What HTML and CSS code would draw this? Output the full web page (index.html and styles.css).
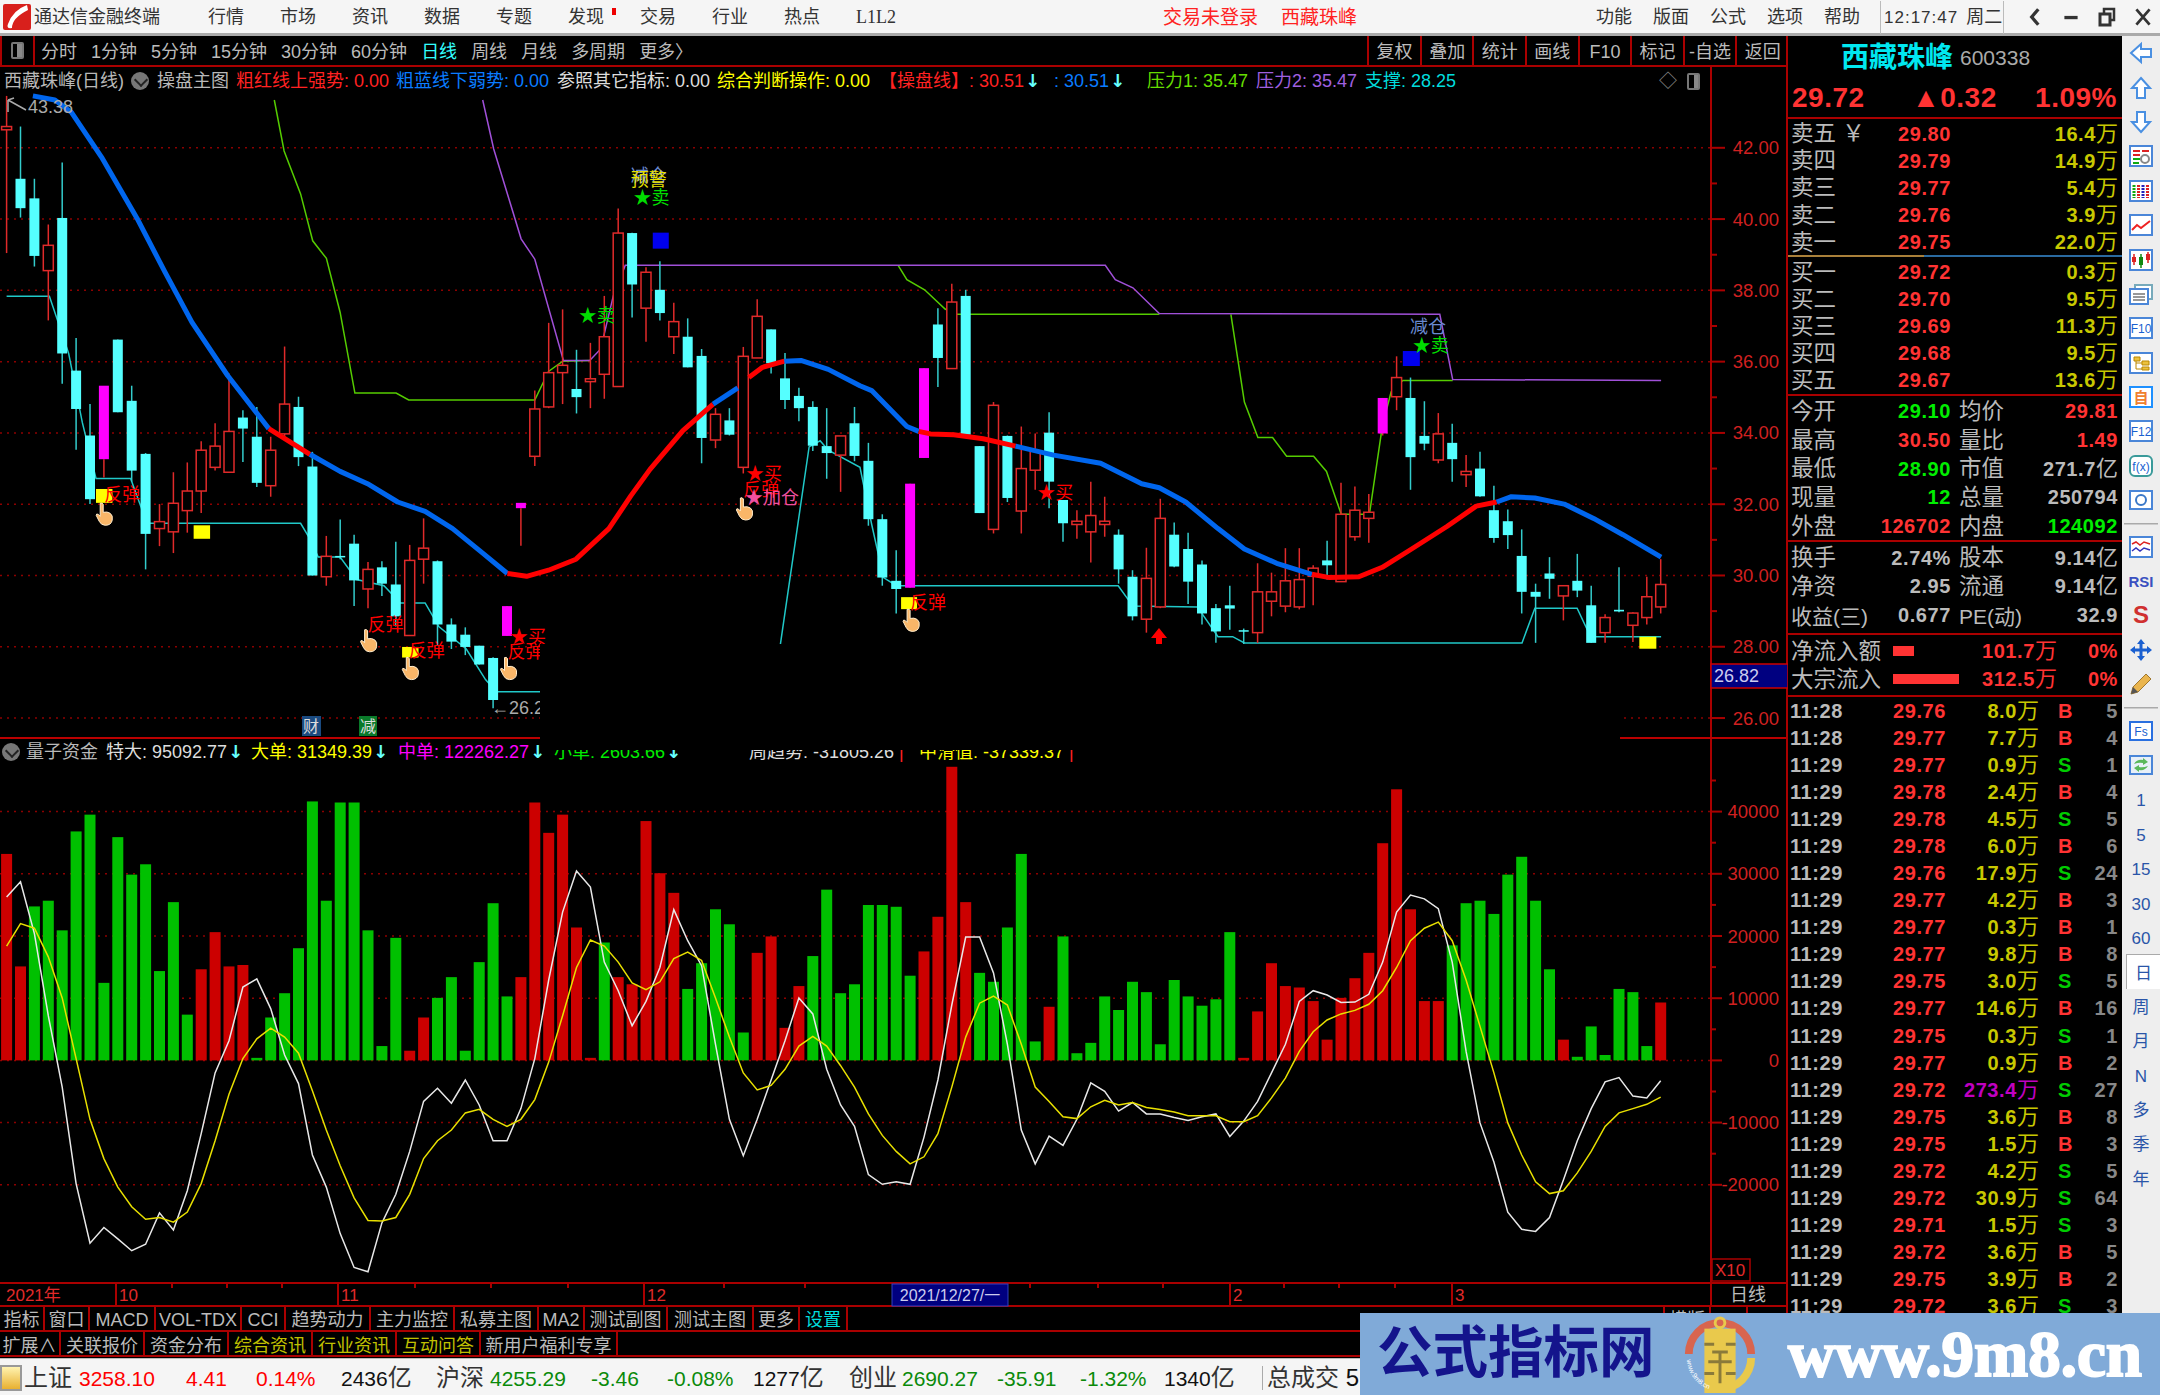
FILE: index.html
```html
<!DOCTYPE html>
<html lang="zh-CN">
<head>
    <meta charset="UTF-8">
    <title>通达信金融终端</title>
    <link rel="stylesheet" href="styles.css">
</head>
<body>

<header class="titlebar">
    <svg class="logo" viewBox="0 0 28 26"><rect width="28" height="26" rx="2" fill="#d8201c"/><path d="M24 1 Q10 6 5 20 Q3 25 9 24 Q9 14 25 6 Z" fill="#fff"/></svg>
    <span class="app-name">通达信金融终端</span>
    <nav class="menu">
        <span>行情</span><span>市场</span><span>资讯</span><span>数据</span><span>专题</span>
        <span class="has-dot">发现<i class="dot"></i></span>
        <span>交易</span><span>行业</span><span>热点</span><span class="serif">L1L2</span>
    </nav>
    <span class="notice login">交易未登录</span>
    <span class="notice stock">西藏珠峰</span>
    <nav class="menu menu-right">
        <span>功能</span><span>版面</span><span>公式</span><span>选项</span><span>帮助</span>
    </nav>
    <div class="clock">12:17:47<span class="week">周二</span></div>
    <div class="winbtns">
        <svg viewBox="0 0 14 20"><path d="M10 3 L4 10 L10 17" fill="none" stroke="#333" stroke-width="3"/></svg>
        <svg viewBox="0 0 14 20"><rect x="1" y="9" width="12" height="3" fill="#333"/></svg>
        <svg viewBox="0 0 18 20"><rect x="6" y="2" width="10" height="11" fill="none" stroke="#333" stroke-width="2.5"/><rect x="2" y="7" width="10" height="11" fill="#f4f4f4" stroke="#333" stroke-width="3"/></svg>
        <svg viewBox="0 0 16 20"><path d="M2 3 L14 17 M14 3 L2 17" stroke="#333" stroke-width="2.5"/></svg>
    </div>
</header>

<div class="workspace">
    <div class="center">
        <div class="periodbar">
            <div class="panel-toggle"><i></i></div>
            <div class="periods">
                <span>分时</span><span>1分钟</span><span>5分钟</span><span>15分钟</span><span>30分钟</span><span>60分钟</span>
                <span class="on">日线</span><span>周线</span><span>月线</span><span>多周期</span><span>更多〉</span>
            </div>
            <div class="actions">
                <span>复权</span><span>叠加</span><span>统计</span><span>画线</span><span>F10</span><span>标记</span><span>-自选</span><span>返回</span>
            </div>
        </div>

        <div class="charts">
            <section class="pane pane-main">
                <div class="pane-head head-main">
                    <span class="c-gray">西藏珠峰(日线)</span>
                    <i class="fold"></i>
                    <span class="c-gray">操盘主图</span>
                    <span class="c-red">粗红线上强势: 0.00</span>
                    <span class="c-blue">粗蓝线下弱势: 0.00</span>
                    <span class="c-white">参照其它指标: 0.00</span>
                    <span class="c-yellow">综合判断操作: 0.00</span>
                    <span class="c-red">【操盘线】: 30.51<b class="arrow">↓</b></span>
                    <span class="c-blue">: 30.51<b class="arrow">↓</b></span>
                    <span class="c-green">压力1: 35.47</span>
                    <span class="c-purple">压力2: 35.47</span>
                    <span class="c-cyan">支撑: 28.25</span>
                    <span class="c-dim">◇</span>
                    <i class="mini-box"></i>
                </div>
                <svg id="mainChart" class="plot" viewBox="0 92 1788 645"></svg>
            </section>
            <section class="pane pane-ind">
                <div class="pane-head head-ind">
                    <i class="fold"></i>
                    <span class="c-gray">量子资金</span>
                    <span class="c-white">特大: 95092.77<b class="arrow">↓</b></span>
                    <span class="c-yellow">大单: 31349.39<b class="arrow">↓</b></span>
                    <span class="c-magenta">中单: 122262.27<b class="arrow">↓</b></span>
                    <span class="c-lime">小单: 2603.66<b class="arrow">↓</b></span>
                    <span class="c-white">周趋势: -31805.26<b class="c-red"> |</b></span>
                    <span class="c-yellow">中滑值: -37339.37<b class="c-red"> |</b></span>
                </div>
                <svg id="indChart" class="plot plot-ind" viewBox="0 764 1788 518"></svg>
            </section>
            <div class="mask"></div>
        </div>

        <svg id="timeAxis" class="timeaxis" viewBox="0 1282 1788 25"></svg>

        <div class="tabs tabs-top">
            <span>指标</span><span>窗口</span><span>MACD</span><span>VOL-TDX</span><span>CCI</span><span>趋势动力</span><span>主力监控</span><span>私募主图</span><span>MA2</span><span>测试副图</span><span>测试主图</span><span>更多</span><span class="c-cyan">设置</span><span></span><span>横版</span><span></span>
        </div>
        <div class="tabs tabs-ext">
            <span>扩展∧</span><span>关联报价</span><span>资金分布</span><span class="c-olive">综合资讯</span><span class="c-olive">行业资讯</span><span class="c-olive">互动问答</span><span>新用户福利专享</span>
        </div>
    </div>

    <aside class="quote">
        <div class="q-name"><span class="q-title">西藏珠峰</span><span class="q-code">600338</span></div>
        <div class="q-price"><span>29.72</span><span>▲0.32</span><span>1.09%</span></div>

        <div class="q-block q-levels">
            <div class="lvl"><span class="lb">卖五 ￥</span><span class="n up">29.80</span><span class="n vol">16.4<i>万</i></span></div>
            <div class="lvl"><span class="lb">卖四</span><span class="n up">29.79</span><span class="n vol">14.9<i>万</i></span></div>
            <div class="lvl"><span class="lb">卖三</span><span class="n up">29.77</span><span class="n vol">5.4<i>万</i></span></div>
            <div class="lvl"><span class="lb">卖二</span><span class="n up">29.76</span><span class="n vol">3.9<i>万</i></span></div>
            <div class="lvl"><span class="lb">卖一</span><span class="n up">29.75</span><span class="n vol">22.0<i>万</i></span></div>
        </div>
        <div class="q-split"></div>
        <div class="q-block q-levels q-lined">
            <div class="lvl"><span class="lb">买一</span><span class="n up">29.72</span><span class="n vol">0.3<i>万</i></span></div>
            <div class="lvl"><span class="lb">买二</span><span class="n up">29.70</span><span class="n vol">9.5<i>万</i></span></div>
            <div class="lvl"><span class="lb">买三</span><span class="n up">29.69</span><span class="n vol">11.3<i>万</i></span></div>
            <div class="lvl"><span class="lb">买四</span><span class="n up">29.68</span><span class="n vol">9.5<i>万</i></span></div>
            <div class="lvl"><span class="lb">买五</span><span class="n up">29.67</span><span class="n vol">13.6<i>万</i></span></div>
        </div>

        <div class="q-block q-stats q-lined">
            <div class="st"><span class="lb">今开</span><span class="n down">29.10</span><span class="lb">均价</span><span class="n up">29.81</span></div>
            <div class="st"><span class="lb">最高</span><span class="n up">30.50</span><span class="lb">量比</span><span class="n up">1.49</span></div>
            <div class="st"><span class="lb">最低</span><span class="n down">28.90</span><span class="lb">市值</span><span class="n flat">271.7<i>亿</i></span></div>
            <div class="st"><span class="lb">现量</span><span class="n down">12</span><span class="lb">总量</span><span class="n flat">250794</span></div>
            <div class="st"><span class="lb">外盘</span><span class="n up">126702</span><span class="lb">内盘</span><span class="n down">124092</span></div>
        </div>
        <div class="q-block q-stats q-fund q-lined">
            <div class="st"><span class="lb">换手</span><span class="n flat">2.74%</span><span class="lb">股本</span><span class="n flat">9.14<i>亿</i></span></div>
            <div class="st"><span class="lb">净资</span><span class="n flat">2.95</span><span class="lb">流通</span><span class="n flat">9.14<i>亿</i></span></div>
            <div class="st"><span class="lb lb-tight">收益(三)</span><span class="n flat">0.677</span><span class="lb lb-tight">PE(动)</span><span class="n flat">32.9</span></div>
        </div>
        <div class="q-block q-flow q-lined">
            <div class="fl"><span class="lb">净流入额</span><span class="bar-cell"><i class="flow-bar" style="width:21px"></i></span><span class="n up">101.7<i>万</i></span><span class="n up">0%</span></div>
            <div class="fl"><span class="lb">大宗流入</span><span class="bar-cell"><i class="flow-bar" style="width:66px"></i></span><span class="n up">312.5<i>万</i></span><span class="n up">0%</span></div>
        </div>
        <div id="ticks" class="q-ticks"></div>
    </aside>

    <aside class="strip">
        <div class="tool"><svg viewBox="0 0 24 24"><path d="M2 12 L12 3 V8 H22 V16 H12 V21 Z" fill="#fff" stroke="#4a90e2" stroke-width="2"/></svg></div>
        <div class="tool"><svg viewBox="0 0 24 24"><path d="M12 2 L21 12 H16 V22 H8 V12 H3 Z" fill="#fff" stroke="#4a90e2" stroke-width="2"/></svg></div>
        <div class="tool"><svg viewBox="0 0 24 24"><path d="M12 22 L21 12 H16 V2 H8 V12 H3 Z" fill="#fff" stroke="#4a90e2" stroke-width="2"/></svg></div>
        <div class="tool"><svg viewBox="0 0 24 24"><rect x="1" y="2" width="22" height="20" fill="#fff" stroke="#4a86d8" stroke-width="2"/><path d="M4 7 H11 M13 7 H20 M4 11 H11" stroke="#d22" stroke-width="2"/><path d="M4 15 H11 M4 19 H10" stroke="#1a1" stroke-width="2"/><circle cx="16" cy="15" r="4" fill="none" stroke="#888" stroke-width="2"/></svg></div>
        <div class="tool"><svg viewBox="0 0 24 24"><rect x="1" y="2" width="22" height="20" fill="#fff" stroke="#4a86d8" stroke-width="2"/><path d="M5 6 V19" stroke="#1a1" stroke-width="3" stroke-dasharray="2 1"/><path d="M9.500 6 V19" stroke="#d22" stroke-width="3" stroke-dasharray="2 1"/><path d="M14 6 V19" stroke="#22b" stroke-width="3" stroke-dasharray="2 1"/><path d="M18.500 6 V19" stroke="#d22" stroke-width="3" stroke-dasharray="2 1"/></svg></div>
        <div class="tool"><svg viewBox="0 0 24 24"><rect x="1" y="2" width="22" height="20" fill="#fff" stroke="#4a86d8" stroke-width="2"/><path d="M3 17 L8 12 L12 15 L21 8" fill="none" stroke="#e22" stroke-width="2"/></svg></div>
        <div class="tool"><svg viewBox="0 0 24 24"><rect x="1" y="2" width="22" height="20" fill="#fff" stroke="#4a86d8" stroke-width="2"/><path d="M5 6 V17 M19 4 V15" stroke="#d22" stroke-width="1.500"/><rect x="3" y="9" width="4" height="5" fill="#d22"/><rect x="17" y="6" width="4" height="6" fill="#d22"/><path d="M12 6 V20" stroke="#181" stroke-width="1.500"/><rect x="10" y="9" width="4" height="8" fill="#181"/></svg></div>
        <div class="tool"><svg viewBox="0 0 24 24"><rect x="6" y="3" width="17" height="14" fill="#fff" stroke="#7ab" stroke-width="2"/><rect x="1" y="7" width="18" height="15" fill="#fff" stroke="#4a86d8" stroke-width="2"/><path d="M4 12 H16 M4 15 H16 M4 18 H16" stroke="#777" stroke-width="1.500"/></svg></div>
        <div class="tool"><svg viewBox="0 0 24 24"><rect x="1" y="2" width="22" height="20" fill="#fff" stroke="#4a86d8" stroke-width="2"/><text x="12" y="17" class="tool-text">F10</text></svg></div>
        <div class="tool"><svg viewBox="0 0 24 24"><rect x="1" y="2" width="22" height="20" fill="#fff" stroke="#4a86d8" stroke-width="2"/><path d="M5 6 H11 V10 H5 Z M13 10 H20 V14 H13 Z M13 16 H20 V19 H13 Z" fill="#ecc13c" stroke="#b80"/><path d="M7 10 V18 H13 M7 12 H13" fill="none" stroke="#b80"/></svg></div>
        <div class="tool"><svg viewBox="0 0 24 24"><rect x="1" y="2" width="22" height="20" fill="#fff" stroke="#1e90ff" stroke-width="2"/><text x="12" y="18" class="tool-cjk">自</text></svg></div>
        <div class="tool"><svg viewBox="0 0 24 24"><rect x="1" y="2" width="22" height="20" fill="#fff" stroke="#4a86d8" stroke-width="2"/><text x="12" y="17" class="tool-text">F12</text></svg></div>
        <div class="tool"><svg viewBox="0 0 24 24"><rect x="1" y="2" width="22" height="20" rx="5" fill="#fff" stroke="#3a9a9a" stroke-width="2"/><text x="12" y="17" class="tool-text">f(x)</text></svg></div>
        <div class="tool"><svg viewBox="0 0 24 24"><rect x="1" y="3" width="22" height="18" fill="#fff" stroke="#4a86d8" stroke-width="2"/><circle cx="12" cy="12" r="5" fill="none" stroke="#3a78c8" stroke-width="2"/></svg></div>
        <div class="tool-sep"></div>
        <div class="tool"><svg viewBox="0 0 24 24"><rect x="1" y="2" width="22" height="20" fill="#fff" stroke="#4a86d8" stroke-width="2"/><path d="M3 9 L7 7 L11 10 L15 7 L21 9" fill="none" stroke="#d22" stroke-width="1.500"/><path d="M3 16 L7 13 L11 16 L15 13 L21 15" fill="none" stroke="#33b" stroke-width="1.500"/></svg></div>
        <div class="tool"><span class="tool-rsi">RSI</span></div>
        <div class="tool"><span class="tool-s">S</span></div>
        <div class="tool"><svg viewBox="0 0 24 24"><path d="M12 1 L16 6 H13.500 V10.500 H18 V8 L23 12 L18 16 V13.500 H13.500 V18 H16 L12 23 L8 18 H10.500 V13.500 H6 V16 L1 12 L6 8 V10.500 H10.500 V6 H8 Z" fill="#1a5fd0"/></svg></div>
        <div class="tool"><svg viewBox="0 0 24 24"><path d="M2 22 L4 15 L17 2 L22 7 L9 20 Z" fill="#eab54e" stroke="#a07830"/><path d="M2 22 L4 15 L9 20 Z" fill="#555"/></svg></div>
        <div class="tool-sep"></div>
        <div class="tool"><svg viewBox="0 0 24 24"><rect x="1" y="3" width="22" height="18" fill="#fff" stroke="#2a70e0" stroke-width="2"/><text x="12" y="17" class="tool-text">Fs</text></svg></div>
        <div class="tool"><svg viewBox="0 0 24 24"><rect x="1" y="3" width="22" height="18" fill="#e8f0f8" stroke="#4a86d8" stroke-width="2"/><path d="M5 11 Q8 6 14 7 L14 5 L19 9 L14 12 L14 10 Q10 9 5 11 Z M19 13 Q16 18 10 17 L10 19 L5 15 L10 12 L10 14 Q14 15 19 13 Z" fill="#5ab85a"/></svg></div>
        <div class="tool tool-label">1</div>
        <div class="tool tool-label">5</div>
        <div class="tool tool-label">15</div>
        <div class="tool tool-label">30</div>
        <div class="tool tool-label">60</div>
        <div class="tool tool-label tool-active">日</div>
        <div class="tool tool-label">周</div>
        <div class="tool tool-label">月</div>
        <div class="tool tool-label">N</div>
        <div class="tool tool-label">多</div>
        <div class="tool tool-label">季</div>
        <div class="tool tool-label">年</div>
    </aside>
</div>

<footer class="statusbar">
    <i class="status-icon"></i>
    <span class="cj">上证</span><span class="c-up">3258.10</span><span class="c-up">4.41</span><span class="c-up">0.14%</span><span class="c-amt">2436<i>亿</i></span>
    <span class="cj">沪深</span><span class="c-dn">4255.29</span><span class="c-dn">-3.46</span><span class="c-dn">-0.08%</span><span class="c-amt">1277<i>亿</i></span>
    <span class="cj">创业</span><span class="c-dn">2690.27</span><span class="c-dn">-35.91</span><span class="c-dn">-1.32%</span><span class="c-amt">1340<i>亿</i></span>
    <span class="cj total">总成交 <span class="c-amt">5</span></span>
</footer>

<div class="watermark">
    <span class="wm-title">公式指标网</span>
    <svg class="wm-logo" viewBox="0 0 80 80">
        <defs><path id="wmArc" d="M6 46 A34 34 0 0 0 38 78"/></defs>
        <path d="M4 40 A36 36 0 0 1 76 40 L68 40 A28 28 0 0 0 12 40 Z" fill="#d8654f"/>
        <path d="M76 44 A36 36 0 0 1 40 80 L40 72 A28 28 0 0 0 68 44 Z" fill="#e9c94c"/>
        <circle cx="40" cy="8" r="5" fill="none" stroke="#e9c94c" stroke-width="3"/>
        <rect x="24" y="14" width="32" height="66" fill="#e9c94c"/>
        <path d="M24 30 H34 M46 30 H56 M32 38 H48 M28 48 H52 M40 38 V70 M24 60 H34 M46 60 H56" stroke="#8a7a3a" stroke-width="3"/>
        <text class="wm-arc"><textPath href="#wmArc">www.9m8.cn</textPath></text>
    </svg>
    <span class="wm-url">www.9m8.cn</span>
</div>

<script src="script.js"></script>
</body>
</html>
```

FILE: styles.css
```css
* {
    box-sizing: border-box;
}

html, body {
    margin: 0;
    padding: 0;
}

body {
    position: relative;
    width: 2160px;
    height: 1395px;
    overflow: hidden;
    background-color: #000;
    color: #bbb;
    font-family: "Liberation Sans", "Noto Sans CJK SC", sans-serif;
    font-size: 18px;
    line-height: 1;
}

i, b {
    font-style: normal;
    font-weight: normal;
}

/* title bar */
.titlebar {
    display: flex;
    align-items: center;
    height: 36px;
    padding-left: 3px;
    padding-top: 1px;
    background-color: #f5f5f5;
    border-bottom: 3px solid #aaa;
    color: #333;
}

.logo {
    width: 28px;
    height: 26px;
}

.app-name {
    margin-left: 3px;
    width: 128px;
}

.menu {
    display: flex;
    gap: 36px;
    margin-left: 46px;
}

.has-dot {
    position: relative;
}

.dot {
    position: absolute;
    top: 0;
    left: 44px;
    width: 4px;
    height: 7px;
    background-color: #e00;
}

.serif {
    font-family: "Liberation Serif", serif;
}

.notice {
    color: #f22;
    font-size: 19px;
}

.login {
    margin-left: 267px;
}

.stock {
    margin-left: 23px;
}

.menu-right {
    gap: 21px;
    margin-left: 239px;
}

.clock {
    display: flex;
    align-items: center;
    width: 124px;
    height: 33px;
    margin-left: 20px;
    padding-left: 3px;
    border-left: 1px solid #bbb;
    border-right: 1px solid #bbb;
    font-size: 17px;
    letter-spacing: 1px;
}

.week {
    margin-left: 8px;
    font-size: 18px;
    letter-spacing: 0;
}

.winbtns {
    display: flex;
    align-items: center;
    gap: 18px;
    margin-left: 22px;
}

.winbtns svg {
    width: 18px;
    height: 22px;
}

/* main area */
.workspace {
    display: flex;
    height: 1322px;
}

.center {
    width: 1788px;
    border-right: 2px solid #a00;
}

.periodbar {
    display: flex;
    align-items: center;
    width: 1788px;
    height: 31px;
    border-bottom: 2px solid #a00;
}

.panel-toggle {
    display: flex;
    align-items: center;
    justify-content: center;
    width: 35px;
    height: 29px;
    border-left: 2px solid #a00;
    border-right: 2px solid #a00;
}

.panel-toggle i, .mini-box {
    display: block;
    width: 13px;
    height: 17px;
    border: 2px solid #777;
    border-radius: 2px;
    background: linear-gradient(90deg, #000 50%, #888 50%);
}

.periods {
    display: flex;
    gap: 14px;
    margin-left: 6px;
    padding-top: 2px;
}

.periods .on {
    color: #3ff;
}

.actions {
    display: flex;
    margin-left: auto;
    height: 29px;
}

.actions span {
    display: flex;
    align-items: center;
    justify-content: center;
    width: 52.600px;
    padding-top: 2px;
    border-left: 2px solid #a00;
}

.charts {
    position: relative;
    height: 1215px;
}

.pane-main {
    height: 670px;
}

.pane-ind {
    height: 545px;
    border-top: 2px solid #b00;
}

.pane-head {
    display: grid;
    align-items: center;
    width: 1712px;
    height: 25px;
    border-right: 2px solid #a00;
    white-space: nowrap;
    font-size: 18px;
}

.head-main {
    grid-template-columns: 127px 26px 79px 160px 161px 160px 162px 175px 93px 109px 109px 294px 28px 20px;
    padding-left: 4px;
    padding-top: 3px;
}

.head-ind {
    grid-template-columns: 24px 80px 145px 147px 156px 195px 170px 170px;
    padding-left: 2px;
}

.fold {
    position: relative;
    display: block;
    width: 18px;
    height: 18px;
    border-radius: 50%;
    background-color: #777;
}

.fold::after {
    content: "";
    position: absolute;
    top: 3px;
    left: 5px;
    width: 8px;
    height: 8px;
    border-right: 2px solid #222;
    border-bottom: 2px solid #222;
    transform: rotate(45deg);
}

.arrow {
    margin-left: 1px;
    color: #6ff;
    font-family: "DejaVu Sans", sans-serif;
    font-weight: bold;
}

.c-gray { color: #b8b8b8; }
.c-red { color: #f22; }
.c-blue { color: #0a7cff; }
.c-white { color: #ddd; }
.c-yellow { color: #ff0; }
.c-green { color: #6d0; }
.c-purple { color: #a060e0; }
.c-cyan { color: #0dd; }
.c-magenta { color: #f0f; }
.c-lime { color: #0e0; }
.c-dim { color: #888; }
.c-olive { color: #c0c000; }

.plot {
    display: block;
    width: 1788px;
    height: 645px;
}

.plot-ind {
    height: 518px;
}

.grid-line {
    stroke: #8c0000;
    stroke-width: 1.500;
    stroke-dasharray: 2 5;
}

.axis-line {
    stroke: #a00;
    stroke-width: 2;
}

.axis-text {
    fill: #d02020;
    font-size: 18.500px;
    text-anchor: end;
    dominant-baseline: central;
}

.wick-c { stroke: #3cc; stroke-width: 1.500; }
.wick-r { stroke: #e02a2a; stroke-width: 1.500; }
.body-c { fill: #5ff; }
.body-r { fill: #000; stroke: #e02a2a; stroke-width: 1.500; }
.body-m { fill: #f0f; }
.thin { fill: none; stroke-width: 1.500; }
.thick { fill: none; stroke-width: 5; stroke-linejoin: round; }

.mark-text {
    font-size: 18px;
    dominant-baseline: central;
}

.tag-text {
    fill: #ddd;
    font-size: 16px;
    text-anchor: middle;
    dominant-baseline: central;
}

.price-text {
    fill: #aaa;
    font-size: 18px;
    dominant-baseline: central;
}

.mask {
    position: absolute;
    top: 577px;
    left: 540px;
    width: 1080px;
    height: 106px;
    background-color: #000;
}

.timeaxis {
    display: block;
    width: 1788px;
    height: 25px;
}

.time-text {
    fill: #e02a2a;
    font-size: 17px;
    dominant-baseline: central;
}

.date-text {
    fill: #cce;
    font-size: 16px;
    text-anchor: middle;
    dominant-baseline: central;
}

.day-text {
    fill: #bbb;
    font-size: 18px;
    text-anchor: middle;
    dominant-baseline: central;
}

.tabs {
    display: grid;
    width: 1788px;
    height: 25px;
    border-bottom: 2px solid #a00;
}

.tabs span {
    display: flex;
    align-items: center;
    justify-content: center;
    padding-top: 2px;
    border-right: 2px solid #a00;
    white-space: nowrap;
}

.tabs-top {
    grid-template-columns: 45px 45px 66px 86px 44px 85px 84px 84px 46px 83px 86px 46px 48px 817px 46px 37px;
}

.tabs-ext {
    grid-template-columns: 61px 84px 84px 84px 84px 84px 137px;
}

.tabs-ext span {
    padding-top: 4px;
}

/* quote panel */
.quote {
    width: 334px;
    padding-left: 3px;
    padding-right: 4px;
    overflow: hidden;
}

.q-name {
    display: flex;
    align-items: center;
    height: 43px;
    padding-left: 50px;
}

.q-title {
    color: #00e8f0;
    font-size: 28px;
    font-weight: bold;
}

.q-code {
    margin-left: 7px;
    color: #aaa;
    font-size: 21px;
}

.q-price {
    display: grid;
    grid-template-columns: 120px 80px 1fr;
    align-items: center;
    height: 40px;
    border-bottom: 2px solid #a00;
    margin-left: -3px;
    margin-right: -4px;
    padding: 0 5px 0 4px;
    color: #f33;
    font-size: 28px;
    font-weight: bold;
    letter-spacing: .5px;
    white-space: nowrap;
}

.q-price span:last-child {
    text-align: right;
}

.lb {
    padding-top: 2px;
    color: #bbb;
    font-size: 22.500px;
    white-space: nowrap;
}

.lb-tight {
    font-size: 21px;
}

.n {
    font-size: 20px;
    font-weight: bold;
    letter-spacing: .6px;
    text-align: right;
    white-space: nowrap;
}

.n i {
    font-size: 22px;
    letter-spacing: 0;
}

.up { color: #f33; }
.down { color: #0e0; }
.flat { color: #bbb; }
.vol { color: #c8c800; }

.q-block {
    margin-left: -3px;
    margin-right: -4px;
    padding: 0 4px 0 3px;
}

.q-levels .lvl {
    display: grid;
    grid-template-columns: 60px 100px 1fr;
    align-items: center;
    height: 27.100px;
}

.q-levels {
    padding-top: 1px;
}

.q-split {
    height: 2px;
    background: linear-gradient(90deg, #a9803a 0 136px, #2a6aa0 136px);
    margin-left: -3px;
    margin-right: -4px;
}

.q-lined {
    border-bottom: 2px solid #a00;
}

.q-stats .st {
    display: grid;
    grid-template-columns: 60px 100px 68px 1fr;
    align-items: center;
    height: 28.700px;
}

.st .lb:nth-child(3) {
    padding-left: 8px;
}

.q-stats {
    padding-top: 1px;
}

.q-fund {
    padding-bottom: 4px;
}

.q-flow {
    padding-top: 2px;
    padding-bottom: 2px;
}

.q-flow .fl {
    display: grid;
    grid-template-columns: 102px 66px 98px 1fr;
    align-items: center;
    height: 28px;
}

.bar-cell {
    display: flex;
}

.flow-bar {
    display: block;
    height: 10px;
    background-color: #f33;
}

.q-ticks {
    margin-left: -1px;
}

.tk {
    display: grid;
    grid-template-columns: 60px 96px 93px 19px 1fr;
    align-items: center;
    height: 27.060px;
}

.tk .time {
    color: #bbb;
    text-align: left;
}

.tk .big {
    color: #c000c0;
}

.tk-end {
    display: flex;
    justify-content: space-between;
}

.bs-b { color: #f33; }
.bs-s { color: #0c0; }
.cnt { color: #888; }

/* icon strip */
.strip {
    width: 38px;
    background-color: #eee;
}

.tool {
    display: flex;
    align-items: center;
    justify-content: center;
    height: 34.400px;
}

.tool svg {
    width: 24px;
    height: 24px;
}

.tool-sep {
    height: 12px;
    margin: 0 2px;
    background: linear-gradient(#aaa, #aaa) center / 100% 1.500px no-repeat;
}

.tool-text {
    fill: #1a5fd0;
    font-size: 12px;
    text-anchor: middle;
}

.tool-cjk {
    fill: #f08030;
    font-size: 15px;
    font-weight: bold;
    text-anchor: middle;
}

.tool-rsi {
    color: #3a50c0;
    font-size: 15px;
    font-weight: bold;
}

.tool-s {
    color: #d03030;
    font-size: 24px;
    font-weight: bold;
}

.tool-label {
    padding-top: 3px;
    color: #2a55a8;
    font-size: 17px;
}

.tool-active {
    background-color: #fff;
    border-top: 1px solid #aaa;
    border-left: 1px solid #aaa;
    margin-left: 4px;
}

/* status bar */
.statusbar {
    display: grid;
    grid-template-columns: 24px 55px 107px 70px 85px 95px 54px 101px 76px 86px 96px 53px 95px 83px 84px 98px 1fr;
    align-items: center;
    height: 37px;
    padding-top: 2px;
    background-color: #f5f5f5;
    border-top: 1px solid #bbb;
    font-size: 21px;
    white-space: nowrap;
}

.status-icon {
    display: block;
    width: 22px;
    height: 26px;
    border: 2px solid #999;
    background: linear-gradient(#fff3b0, #e8b030);
}

.statusbar .cj {
    color: #333;
    font-size: 24px;
}

.c-up { color: #f00; }
.c-dn { color: #0a8a0a; }

.c-amt {
    color: #111;
}

.c-amt i {
    color: #333;
    font-size: 24px;
}

.total {
    padding-left: 4px;
    border-left: 1px solid #aaa;
}

/* site stamp over the bottom right corner */
.watermark {
    position: absolute;
    left: 1360px;
    top: 1313px;
    display: flex;
    align-items: center;
    width: 800px;
    height: 82px;
    padding-left: 17px;
    background-color: #80aad8;
}

.wm-title {
    width: 278px;
    color: #14148c;
    font-size: 55.500px;
    font-weight: bold;
    white-space: nowrap;
}

.wm-logo {
    width: 78px;
    height: 78px;
    margin-left: 26px;
}

.wm-arc {
    fill: #fff;
    font-size: 7px;
}

.wm-url {
    margin-left: 29px;
    color: #fff;
    font-family: "Liberation Serif", serif;
    font-size: 65px;
    font-weight: bold;
    -webkit-text-stroke: 2px #fff;
    white-space: nowrap;
}
```

FILE: script.js
```js
// picture coordinates: candles are read in a 2.45 y scale from y=100
const YM = z => 100 + z / 2.45;
const YI = z => 730 + z / 2.8;
const A = (x, y) => [x / 1.823, YM(y)];
const B = (x, y) => [860 + x / 1.704, YM(y)];
const BX = i => 6.6 + 13.9 * i;

// kind, wick top, body top, body bottom, wick bottom
const candles = [
    ['r',-10,65,73,375],['c',65,193,265,288],['c',193,241,382,408],['r',305,356,418,540],['c',153,289,621,695],
    ['c',583,663,757,857],['c',745,822,978,990],['m',880,700,880,925],['c',587,587,765,765],['c',700,737,908,935],
    ['c',865,867,1063,1150],['r',990,1033,1050,1093],['r',912,988,1058,1110],['r',888,958,1006,1060],['r',836,858,958,1012],
    ['r',792,848,900,908],['r',670,812,912,912],['c',760,778,805,887],['c',752,825,938,948],['r',825,858,945,972],
    ['r',604,745,818,825],['c',727,752,875,897],['c',862,898,1165,1165],['r',1068,1118,1168,1190],['c',1028,1117,1119,1125],
    ['c',1065,1087,1177,1240],['r',1132,1150,1198,1245],['c',1130,1145,1185,1215],['c',1082,1187,1265,1290],['r',1090,1128,1312,1312],
    ['r',1025,1098,1125,1185],['c',1128,1130,1285,1335],['c',1270,1285,1327,1345],['c',1292,1310,1340,1360],['c',1337,1337,1383,1383],
    ['c',1365,1367,1470,1490],['m',1240,1240,1313,1313],['m',1000,987,1000,1092],['r',712,757,873,897],['r',546,668,752,755],
    ['r',513,650,668,745],['c',612,708,728,768],['r',595,683,690,755],['r',480,580,672,732],['r',266,326,702,702],
    ['c',325,326,452,533],['r',410,422,510,592],['c',395,465,522,540],['r',497,543,580,622],['c',535,580,655,655],
    ['c',610,627,828,890],['r',755,770,833,853],['c',755,785,820,822],['r',605,628,900,915],['r',488,530,632,632],
    ['c',562,562,645,670],['c',620,682,735,757],['c',705,725,755,787],['c',738,752,847,860],['c',755,848,865,928],
    ['r',823,823,870,960],['c',752,792,872,885],['c',840,884,1027,1043],['c',1015,1027,1170,1190],['c',1103,1178,1198,1258],
    ['m',940,940,1195,1195],['m',657,657,877,877],['c',510,550,632,703],['r',450,495,658,658],['c',465,480,820,822],
    ['c',848,848,1012,1012],['r',740,748,1052,1062],['c',822,823,975,985],['r',800,903,1007,1062],['r',817,860,907,955],
    ['c',765,815,935,1000],['c',980,980,1037,1082],['r',1005,1032,1040,1075],['r',935,1018,1058,1133],['r',972,1032,1040,1070],
    ['c',1052,1065,1150,1185],['c',1152,1168,1265,1275],['r',1097,1172,1272,1305],['r',977,1025,1242,1245],['c',1035,1065,1143,1145],
    ['c',1060,1100,1180,1235],['c',1128,1138,1258,1285],['c',1235,1245,1302,1330],['c',1190,1238,1246,1298],['c',1295,1299,1301,1400],
    ['r',1135,1205,1305,1330],['r',1158,1205,1228,1265],['r',1098,1178,1240,1255],['r',1098,1175,1242,1248],['r',1140,1147,1167,1238],
    ['c',1080,1128,1140,1175],['r',938,1015,1180,1180],['r',947,1005,1070,1080],['r',965,1010,1025,1085],['m',730,730,817,822],
    ['r',628,680,727,760],['c',680,730,875,955],['c',738,823,842,858],['r',767,818,882,890],['c',793,840,880,935],
    ['r',870,910,918,948],['c',862,903,971,972],['c',945,1005,1073,1085],['c',1003,1032,1066,1100],['c',1052,1117,1205,1258],
    ['c',1185,1205,1217,1330],['c',1120,1160,1173,1222],['r',1190,1190,1215,1275],['c',1112,1178,1202,1218],['c',1190,1238,1330,1330],
    ['r',1260,1268,1305,1330],['c',1145,1249,1253,1255],['r',1255,1257,1287,1328],['r',1168,1217,1268,1285],['r',1125,1187,1242,1258]
];

// column tops of the money flow bars, positive side only
const bars = 'R347 R662 G494 G478 G561 G284 G237 G708 G300 G405 G376 G675 G482 G797 R670 R566 R662 R658 G918 G805 G737 G611 G200 G478 G203 G203 G561 G885 G582 R898 R805 G750 G692 G898 G650 G485 G746 R692 R203 R288 R237 R553 R918 G595 R692 R712 R255 R401 R456 G725 G653 G502 G544 G847 R624 R578 R834 R717 G633 G447 G737 G712 G490 G490 G495 G688 R620 R523 R103 R482 G680 G705 G553 G347 G872 R775 G578 G905 G876 G746 G784 G705 G734 G880 G700 G746 G772 G754 G566 R918 R788 R653 R717 R721 R759 R867 R750 R695 R624 R317 R166 R502 R759 R759 G603 G485 G478 G515 G405 G355 G478 G670 R867 G915 G830 G910 G725 G734 G885 R763'.split(' ');

const whiteLine = [468,425,570,800,1000,1270,1437,1393,1425,1458,1440,1352,1400,1290,1130,960,870,720,697,780,910,990,1190,1280,1410,1505,1517,1380,1300,1180,1040,1003,1045,980,1050,1150,1150,1060,920,700,510,395,440,650,730,828,760,665,503,590,660,880,1090,1192,1090,980,870,750,795,950,1050,1110,1245,1272,1265,1272,1140,980,770,580,580,680,880,1120,1215,1137,1163,1090,988,1012,1067,1043,1075,1075,1085,1093,1083,1075,1138,1095,1040,960,880,760,730,742,763,762,740,650,510,462,473,500,650,900,1100,1210,1350,1398,1404,1365,1260,1150,1060,985,973,1025,1030,982];
const yellowLine = [605,542,555,635,750,920,1090,1200,1280,1335,1370,1365,1378,1350,1270,1150,1020,920,865,835,860,905,1010,1120,1220,1310,1373,1375,1365,1300,1200,1150,1120,1072,1062,1090,1110,1090,1035,930,800,665,588,605,650,708,727,705,640,622,645,750,860,960,1008,995,950,885,858,885,940,1000,1075,1135,1180,1215,1195,1130,1000,860,765,745,770,880,1000,1040,1083,1088,1055,1037,1050,1043,1057,1063,1070,1080,1080,1080,1097,1097,1080,1030,975,900,845,812,795,785,768,730,665,590,555,538,590,700,830,960,1100,1190,1265,1298,1290,1240,1180,1110,1072,1060,1048,1028];

const ticks = [
    ['11:28','29.76','8.0','B',5],['11:28','29.77','7.7','B',4],['11:29','29.77','0.9','S',1],['11:29','29.78','2.4','B',4],
    ['11:29','29.78','4.5','S',5],['11:29','29.78','6.0','B',6],['11:29','29.76','17.9','S',24],['11:29','29.77','4.2','B',3],
    ['11:29','29.77','0.3','B',1],['11:29','29.77','9.8','B',8],['11:29','29.75','3.0','S',5],['11:29','29.77','14.6','B',16],
    ['11:29','29.75','0.3','S',1],['11:29','29.77','0.9','B',2],['11:29','29.72','273.4','S',27],['11:29','29.75','3.6','B',8],
    ['11:29','29.75','1.5','B',3],['11:29','29.72','4.2','S',5],['11:29','29.72','30.9','S',64],['11:29','29.71','1.5','S',3],
    ['11:29','29.72','3.6','B',5],['11:29','29.75','3.9','B',2],['11:29','29.72','3.6','S',3]
];

const poly = (pts, color, cls) =>
    `<polyline class="${cls}" stroke="${color}" points="${pts.map(p => p.map(v => v.toFixed(1)).join(',')).join(' ')}"/>`;
const line = (x1, y1, x2, y2, cls) => `<line class="${cls}" x1="${x1}" y1="${y1}" x2="${x2}" y2="${y2}"/>`;
const rect = (x, y, w, h, fill) => `<rect x="${x}" y="${y}" width="${w}" height="${h}" fill="${fill}"/>`;
const HAND = 'M5 1 Q7 0 8 2 L8 10 Q12 9 15 11 Q18 13 17 18 Q16 23 10 23 Q6 23 4 19 L1 13 Q1 11 3 12 L5 14 Z';
const hand = ([x, y]) => `<path transform="translate(${(x - 9).toFixed(1)} ${(y - 12).toFixed(1)})" d="${HAND}" fill="#f9b668" stroke="#ffeccc" stroke-width="1"/>`;
const mark = (txt, [x, y], color) => `<text class="mark-text" x="${x.toFixed(1)}" y="${y.toFixed(1)}" fill="${color}">${txt}</text>`;

function drawMain() {
    let s = '';
    for (let p = 42; p >= 26; p -= 2) {
        const y = 147.8 + (42 - p) * 35.64;
        s += line(0, y, 1710, y, 'grid-line');
        s += line(1711, y, 1725, y, 'axis-line');
        s += `<text class="axis-text" x="1779" y="${y}">${p}.00</text>`;
        if (p > 26) s += line(1711, y + 35.64, 1717, y + 35.64, 'axis-line');
    }

    // stepped support and pressure lines sit behind the candles
    s += poly([A(500,0),A(518,125),A(548,230),A(570,345),A(595,388),A(620,520),A(647,718),A(722,718),A(745,735),A(975,735),A(1000,665),A(1026,640),A(1075,638)], '#55cc00', 'thin');
    s += poly([B(65,405),B(80,440),B(110,465),B(145,512),B(165,525),B(510,525)], '#55cc00', 'thin');
    s += poly([B(632,525),B(655,740),B(678,827),B(703,827),B(727,873),B(773,873),B(795,910),B(820,1015),B(868,1015),B(890,800),B(905,715),B(925,687),B(1010,687)], '#55cc00', 'thin');
    s += poly([A(880,0),A(900,120),A(950,340),A(975,390),A(1027,638),A(1075,638),A(1095,610),A(1118,480),A(1140,405),B(418,405),B(435,440),B(465,460),B(510,523),B(988,525),B(1010,685),B(1365,687)], '#a050d8', 'thin');
    s += poly([A(12,481),A(90,481),A(125,620),A(150,790),A(175,927),A(238,927),A(258,1000),A(265,1037),A(548,1037),A(565,1075),A(580,1120),A(620,1120),A(650,1175),A(700,1190),A(730,1232),A(775,1232),A(800,1290),A(850,1345),A(885,1420),A(905,1450),A(1410,1450),A(1423,1330),A(1475,850),A(1495,835),A(1510,858),B(0,900),B(20,1040),B(40,1170),B(62,1190),B(440,1190),B(465,1240),B(575,1242),B(610,1315),B(635,1315),B(655,1330),B(1128,1330),B(1150,1245),B(1222,1245),B(1245,1315),B(1365,1315)], '#20c8c8', 'thin');

    candles.forEach((c, i) => {
        const x = BX(i), top = YM(c[2]), bot = YM(c[3]);
        s += line(x, YM(c[1]), x, YM(c[4]), c[0] === 'c' ? 'wick-c' : 'wick-r');
        s += `<rect class="body-${c[0]}" x="${x - 5}" y="${top}" width="10" height="${Math.max(bot - top, 1.5)}"/>`;
    });

    // trend line, colour flips with direction
    const blue = '#0066ee', red = '#ff0000';
    [
        [blue, [A(60,-10),A(100,0),A(130,30),A(185,140),A(250,290),A(300,420),A(350,545),A(415,675),A(490,805)]],
        [red, [A(490,805),A(520,830),A(565,868)]],
        [blue, [A(565,868),A(620,910),A(670,940),A(725,985),A(775,1008),A(825,1050),A(880,1110),A(925,1160)]],
        [red, [A(925,1160),A(960,1167),A(1000,1152),A(1050,1125),A(1110,1050),A(1150,970),A(1185,905),A(1245,810),A(1300,745)]],
        [blue, [A(1300,745),A(1345,705)]],
        [red, [A(1365,680),A(1390,655),A(1430,640)]],
        [blue, [A(1430,640),A(1460,638),A(1510,660),B(0,700),B(20,712),B(80,800),B(100,812)]],
        [red, [B(100,812),B(120,818),B(160,820),B(210,830),B(265,848)]],
        [blue, [B(265,848),B(330,870),B(410,890),B(480,940),B(510,950),B(555,985),B(610,1050),B(655,1100),B(710,1135),B(770,1162)]],
        [red, [B(770,1162),B(800,1170),B(850,1168),B(890,1145),B(940,1100),B(1000,1045),B(1050,995),B(1085,985)]],
        [blue, [B(1085,985),B(1110,972),B(1150,975),B(1200,990),B(1250,1025),B(1300,1065),B(1365,1120)]]
    ].forEach(seg => { s += poly(seg[1], seg[0], 'thick'); });

    // yellow and blue squares
    [[175,953,30,34],[353,1042,30,33],[733,1340,30,26]].forEach(r => {
        s += rect(r[0] / 1.823, YM(r[1]), r[2] / 1.823, r[3] / 2.45, '#ff0');
    });
    s += rect(B(70,0)[0], YM(1218), 16, 12, '#ff0') + rect(B(1328,0)[0], YM(1315), 17, 12, '#ff0');
    s += rect(A(1190,0)[0], YM(325), 16, 16, '#0000ee') + rect(B(925,0)[0], YM(615), 17, 15, '#0000ee');

    [A(190,1015),A(672,1325),A(748,1393),A(927,1393),A(1357,1002),B(87,1275)].forEach(p => { s += hand(p); });

    const RED = '#f00', GREEN = '#0d0';
    [
        ['反弹', A(190,968), RED], ['反弹', A(670,1285), RED], ['反弹', A(745,1350), RED],
        ['反弹', A(925,1352), RED], ['反弹', A(1355,955), RED], ['反弹', B(85,1233), RED],
        ['★买', A(930,1315), RED], ['★买', A(1360,915), RED], ['★买', B(302,963), RED],
        ['★加仓', A(1358,975), '#f050a0'],
        ['★卖', A(1155,240), GREEN], ['★卖', A(1055,530), GREEN], ['★卖', B(942,603), GREEN],
        ['减仓', B(937,557), '#6a8ad0'], ['减仓', A(1150,185), '#6a8ad0'], ['预警', A(1150,195), '#e8e000']
    ].forEach(m => { s += mark(m[0], m[1], m[2]); });

    s += `<path d="M1159 628 L1167 638 L1162 638 L1162 646 L1156 646 L1156 638 L1151 638 Z" fill="#f00"/>`;

    s += `<path d="M8 112 V100 M8 100 L26 110 M8 100 L14 98" fill="none" stroke="#aaa" stroke-width="1.500"/>`;
    s += `<text class="price-text" x="28" y="107">43.38</text>`;
    s += `<text class="price-text" x="491" y="708" fill="#aaa">←26.2</text>`;

    s += rect(302, 716, 19, 20, '#1a4a80') + `<text class="tag-text" x="311" y="726">财</text>`;
    s += rect(359, 716, 18, 20, '#0a7a2a') + `<text class="tag-text" x="368" y="726">减</text>`;

    // axis column and current cross value
    s += line(1711, 92, 1711, 737, 'axis-line');
    s += `<rect x="1711" y="664" width="77" height="24" fill="#000080" stroke="#c00" stroke-width="1.500"/>`;
    s += `<text x="1714" y="676" class="price-text" style="fill:#cce">26.82</text>`;

    document.getElementById('mainChart').innerHTML = s;
}

function drawIndicator() {
    const zero = 1060.4, perTen = 62.2;
    let s = '';
    for (let v = 40000; v >= -20000; v -= 10000) {
        const y = zero - v / 10000 * perTen;
        s += line(0, y, 1710, y, 'grid-line');
        s += line(1711, y, 1722, y, 'axis-line');
        s += line(1711, y - perTen / 2, 1716, y - perTen / 2, 'axis-line');
        s += `<text class="axis-text" x="1779" y="${y}">${v}</text>`;
    }
    bars.forEach((b, i) => {
        const y = YI(+b.slice(1));
        s += rect(BX(i) - 5.5, y, 11, zero - y, b[0] === 'R' ? '#cc0000' : '#00c000');
    });
    s += poly(whiteLine.map((z, i) => [BX(i), YI(z)]), '#e8e8e8', 'thin');
    s += poly(yellowLine.map((z, i) => [BX(i), YI(z)]), '#e8e000', 'thin');

    s += line(1711, 764, 1711, 1282, 'axis-line');
    s += `<rect x="1712" y="1259" width="38" height="22" fill="none" stroke="#a00" stroke-width="1.500"/>`;
    s += `<text x="1715" y="1270" class="time-text">X10</text>`;
    document.getElementById('indChart').innerHTML = s;
}

function drawTime() {
    let s = line(0, 1283, 1788, 1283, 'axis-line') + line(0, 1306, 1788, 1306, 'axis-line');
    [172,227,282,415,491,568,724,805,1030,1098,1163,1284,1339,1395].forEach(x => { s += line(x, 1283, x, 1288, 'axis-line'); });
    [[116,'10'],[338,'11'],[644,'12'],[1230,'2'],[1452,'3']].forEach(t => {
        s += line(t[0], 1283, t[0], 1306, 'axis-line');
        s += `<text class="time-text" x="${t[0] + 3}" y="1295">${t[1]}</text>`;
    });
    s += `<text class="time-text" x="6" y="1295">2021年</text>`;
    s += `<rect x="892" y="1284" width="116" height="22" fill="#000080" stroke="#3040c0"/>`;
    s += `<text class="date-text" x="950" y="1295">2021/12/27/一</text>`;
    s += line(1711, 1283, 1711, 1306, 'axis-line');
    s += `<text class="day-text" x="1748" y="1295">日线</text>`;
    document.getElementById('timeAxis').innerHTML = s;
}

function fillTicks() {
    document.getElementById('ticks').innerHTML = ticks.map(t => {
        const volClass = parseFloat(t[2]) > 100 ? 'big' : 'vol';
        return `<div class="tk"><span class="n time">${t[0]}</span><span class="n up">${t[1]}</span>` +
            `<span class="n ${volClass}">${t[2]}<i>万</i></span><span></span>` +
            `<span class="n tk-end"><span class="bs-${t[3].toLowerCase()}">${t[3]}</span><span class="cnt">${t[4]}</span></span></div>`;
    }).join('');
}

drawMain();
drawIndicator();
drawTime();
fillTicks();
```
